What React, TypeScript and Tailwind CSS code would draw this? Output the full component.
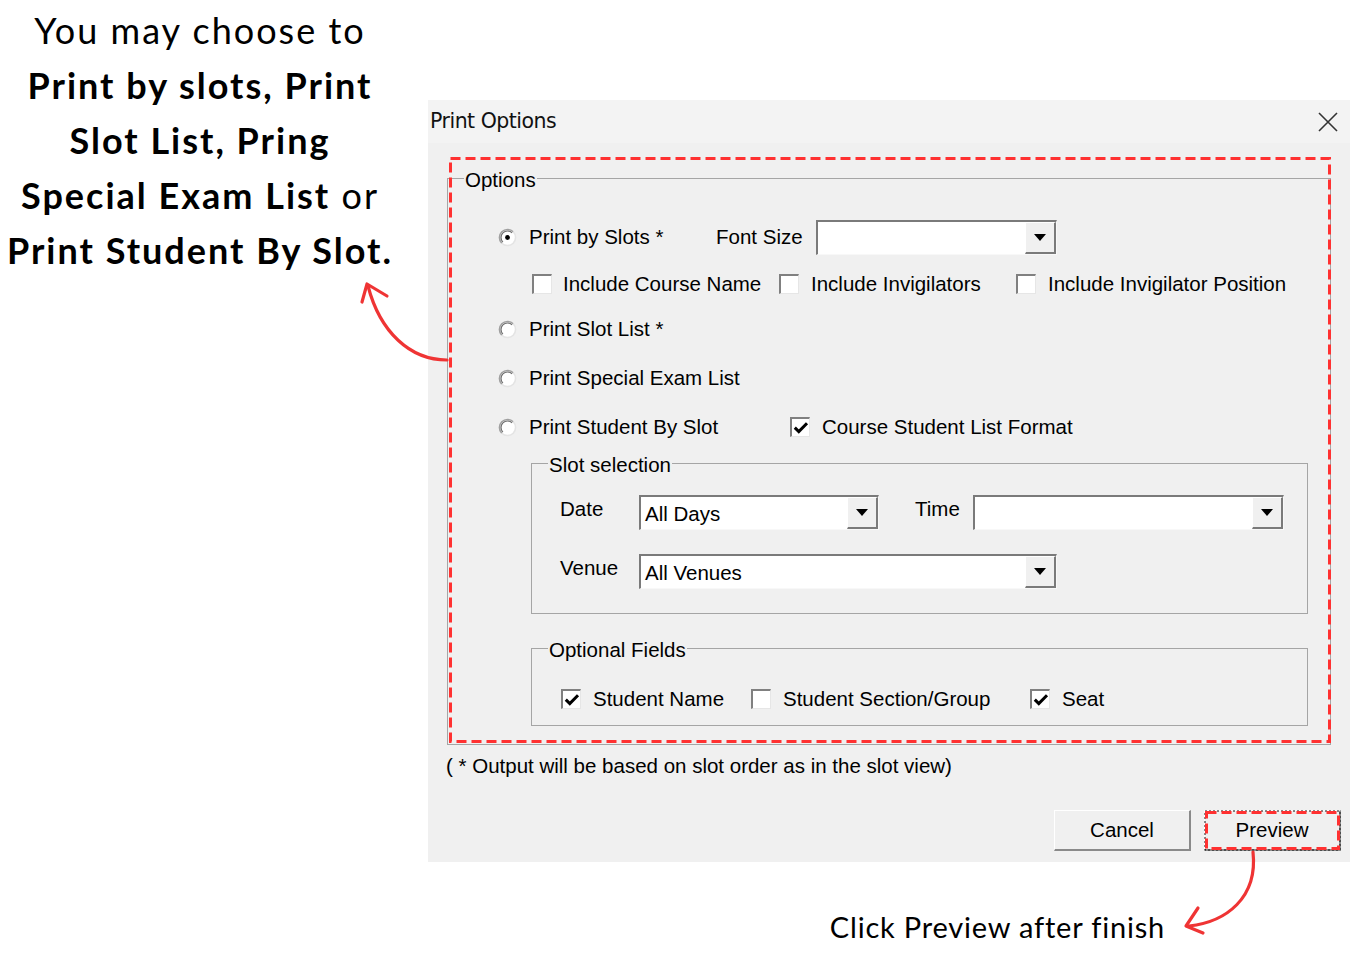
import React from "react";

const ui = "font-['Liberation_Sans',Arial,sans-serif]";

function Radio({ checked }: { checked?: boolean }) {
  return (
    <svg width="19" height="19" viewBox="0 0 19 19" className="shrink-0">
      <circle cx="9.5" cy="9.5" r="8" fill="#fff" />
      <path d="M3.8 15.2 A8 8 0 0 1 15.2 3.8" fill="none" stroke="#a0a0a0" strokeWidth="1.6" />
      <path d="M4.9 14.1 A6.5 6.5 0 0 1 14.1 4.9" fill="none" stroke="#6e6e6e" strokeWidth="1.2" />
      <path d="M15.2 3.8 A8 8 0 0 1 3.8 15.2" fill="none" stroke="#e4e4e4" strokeWidth="1.6" />
      {checked && <circle cx="9.5" cy="9.5" r="2.4" fill="#000" />}
    </svg>
  );
}

function Check({ checked }: { checked?: boolean }) {
  return (
    <div className="w-[20px] h-[20px] shrink-0 border-t-2 border-l-2 border-r border-b border-t-[#808080] border-l-[#808080] border-r-[#e6e6e6] border-b-[#e6e6e6] bg-white flex items-center justify-center">
      {checked && (
        <svg width="16" height="16" viewBox="0 0 16 16">
          <path d="M1.8 7.6 L5.8 11.6 L14 3.2" fill="none" stroke="#000" strokeWidth="3" />
        </svg>
      )}
    </div>
  );
}

function Combo({ w, value }: { w: string; value?: string }) {
  return (
    <div
      className={`${w} h-[35px] shrink-0 border-t-2 border-l-2 border-t-[#7a7a7a] border-l-[#7a7a7a] border-r border-b border-r-[#f8f8f8] border-b-[#f8f8f8] bg-white flex`}
    >
      <div className="flex-1 pl-[4px] pt-[2px] flex items-center text-[20.5px] text-black">{value}</div>
      <div className="w-[31px] h-full bg-[#f0f0f0] border-t border-l border-t-white border-l-white border-r-2 border-b-2 border-r-[#7a7a7a] border-b-[#7a7a7a] flex items-center justify-center">
        <svg width="12" height="7" viewBox="0 0 12 7">
          <path d="M0 0 H12 L6 7 Z" fill="#000" />
        </svg>
      </div>
    </div>
  );
}

function Btn({ children, focus }: { children: React.ReactNode; focus?: boolean }) {
  return (
    <div className="relative w-[137px] h-[41px] bg-[#f0f0f0] border-t border-l border-t-white border-l-white border-r-2 border-b-2 border-r-[#8a8a8a] border-b-[#8a8a8a] flex items-center justify-center text-[20.5px] text-black">
      {children}
      {focus && (
        <svg className="absolute left-[-1px] top-[-1px] pointer-events-none" width="137" height="41" viewBox="0 0 137 41">
          <rect x="1" y="1" width="135" height="39" fill="none" stroke="#111" strokeWidth="1" strokeDasharray="2 2" />
          <rect x="2.5" y="2.5" width="132" height="36" fill="none" stroke="#ff3131" strokeWidth="3" strokeDasharray="10 5" />
        </svg>
      )}
    </div>
  );
}

function Legend({ children }: { children: React.ReactNode }) {
  return <legend className="px-[1px] pt-[4px] leading-[20px]">{children}</legend>;
}

export default function App() {
  return (
    <div className="relative w-[1358px] h-[963px] bg-white flex overflow-hidden">
      {/* left annotation */}
      <div className="w-[428px] shrink-0">
        <div className="w-[400px] pt-[3px] text-center text-[36px] leading-[55px] tracking-[2px] text-black font-['Lato',sans-serif]">
          <div className="font-normal">You may choose to</div>
          <div className="font-bold">Print by slots, Print</div>
          <div className="font-bold">Slot List, Pring</div>
          <div>
            <span className="font-bold">Special Exam List</span> <span className="font-normal">or</span>
          </div>
          <div className="font-bold">Print Student By Slot.</div>
        </div>
      </div>

      {/* right */}
      <div className="flex-1 flex flex-col pt-[100px]">
        <div className={`relative w-[922px] h-[762px] bg-[#f0f0f0] text-black ${ui}`}>
          {/* title bar */}
          <div className="h-[43px] bg-[#f3f3f3] flex items-center justify-between pl-[2px] pr-[12px]">
            <span className="text-[20.5px] text-[#111] font-['DejaVu_Sans',sans-serif] tracking-[-0.5px]">Print Options</span>
            <svg width="20" height="20" viewBox="0 0 20 20">
              <path d="M1 1 L19 19 M19 1 L1 19" stroke="#333" strokeWidth="1.6" />
            </svg>
          </div>

          {/* body */}
          <div className="px-[19px] pt-[23px] text-[20.5px]">
            <fieldset className="m-0 min-w-0 border border-[#a5a5a5] pl-[16px] pr-[22px] pb-[18px]">
              <Legend>Options</Legend>

              <div className="mt-[22px] h-[50px] flex items-center ml-[34px]">
                <div className="w-[218px] flex items-center gap-[12px]">
                  <Radio checked />
                  <span>Print by Slots *</span>
                </div>
                <div className="w-[100px]">Font Size</div>
                <Combo w="w-[241px]" />
              </div>

              <div className="h-[44px] flex items-center ml-[68px]">
                <div className="w-[247px] flex items-center gap-[11px]">
                  <Check />
                  <span>Include Course Name</span>
                </div>
                <div className="w-[237px] flex items-center gap-[12px]">
                  <Check />
                  <span>Include Invigilators</span>
                </div>
                <div className="flex items-center gap-[12px]">
                  <Check />
                  <span>Include Invigilator Position</span>
                </div>
              </div>

              <div className="h-[47px] flex items-center ml-[34px] gap-[12px]">
                <Radio />
                <span>Print Slot List *</span>
              </div>

              <div className="h-[50px] flex items-center ml-[34px] gap-[12px]">
                <Radio />
                <span>Print Special Exam List</span>
              </div>

              <div className="h-[48px] flex items-center ml-[34px]">
                <div className="w-[292px] flex items-center gap-[12px]">
                  <Radio />
                  <span>Print Student By Slot</span>
                </div>
                <div className="flex items-center gap-[12px]">
                  <Check checked />
                  <span>Course Student List Format</span>
                </div>
              </div>

              <fieldset className="m-0 min-w-0 ml-[67px] border border-[#a5a5a5] pl-[16px] pb-[24px]">
                <Legend>Slot selection</Legend>
                <div className="mt-[20px] h-[35px] flex items-center">
                  <div className="ml-[12px] w-[79px] pb-[6px]">Date</div>
                  <Combo w="w-[240px]" value="All Days" />
                  <div className="ml-[36px] w-[58px] pb-[6px]">Time</div>
                  <Combo w="w-[311px]" />
                </div>
                <div className="mt-[24px] h-[35px] flex items-center">
                  <div className="ml-[12px] w-[79px] pb-[6px]">Venue</div>
                  <Combo w="w-[418px]" value="All Venues" />
                </div>
              </fieldset>

              <fieldset className="m-0 min-w-0 mt-[22px] ml-[67px] border border-[#a5a5a5] pl-[16px] pb-[11px]">
                <Legend>Optional Fields</Legend>
                <div className="mt-[24px] h-[30px] flex items-center ml-[13px]">
                  <div className="w-[190px] flex items-center gap-[12px]">
                    <Check checked />
                    <span>Student Name</span>
                  </div>
                  <div className="w-[279px] flex items-center gap-[12px]">
                    <Check />
                    <span>Student Section/Group</span>
                  </div>
                  <div className="flex items-center gap-[12px]">
                    <Check checked />
                    <span>Seat</span>
                  </div>
                </div>
              </fieldset>
            </fieldset>

            <div className="mt-[9px] leading-[24px] -ml-[1px]">( * Output will be based on slot order as in the slot view)</div>
          </div>

          <div className="mt-[32px] flex justify-end gap-[13px] pr-[9px]">
            <Btn>Cancel</Btn>
            <Btn focus>Preview</Btn>
          </div>

          {/* red dashed highlight */}
          <svg className="absolute left-[21px] top-[57px] pointer-events-none" width="882" height="586" viewBox="0 0 882 586">
            <rect x="1.5" y="1.5" width="879" height="583" fill="none" stroke="#ff3131" strokeWidth="3" strokeDasharray="10 5" />
          </svg>
        </div>

        <div className="mt-[47px] flex justify-end pr-[193px]">
          <span className="text-[29px] leading-[36px] tracking-[0.8px] text-black font-['Lato',sans-serif]">Click Preview after finish</span>
        </div>
      </div>

      {/* arrows */}
      <svg className="absolute left-0 top-0 pointer-events-none" width="1358" height="963" viewBox="0 0 1358 963">
        <g fill="none" stroke="#ef3434" strokeWidth="3.2" strokeLinecap="round" strokeLinejoin="round">
          <path d="M447 360 C410 360 380 332 368 286" />
          <path d="M362 302 L367 284 L387 296" />
          <path d="M1253 852 C1258 898 1226 922 1189 926" />
          <path d="M1198 908 L1186 926 L1203 933" />
        </g>
      </svg>
    </div>
  );
}
